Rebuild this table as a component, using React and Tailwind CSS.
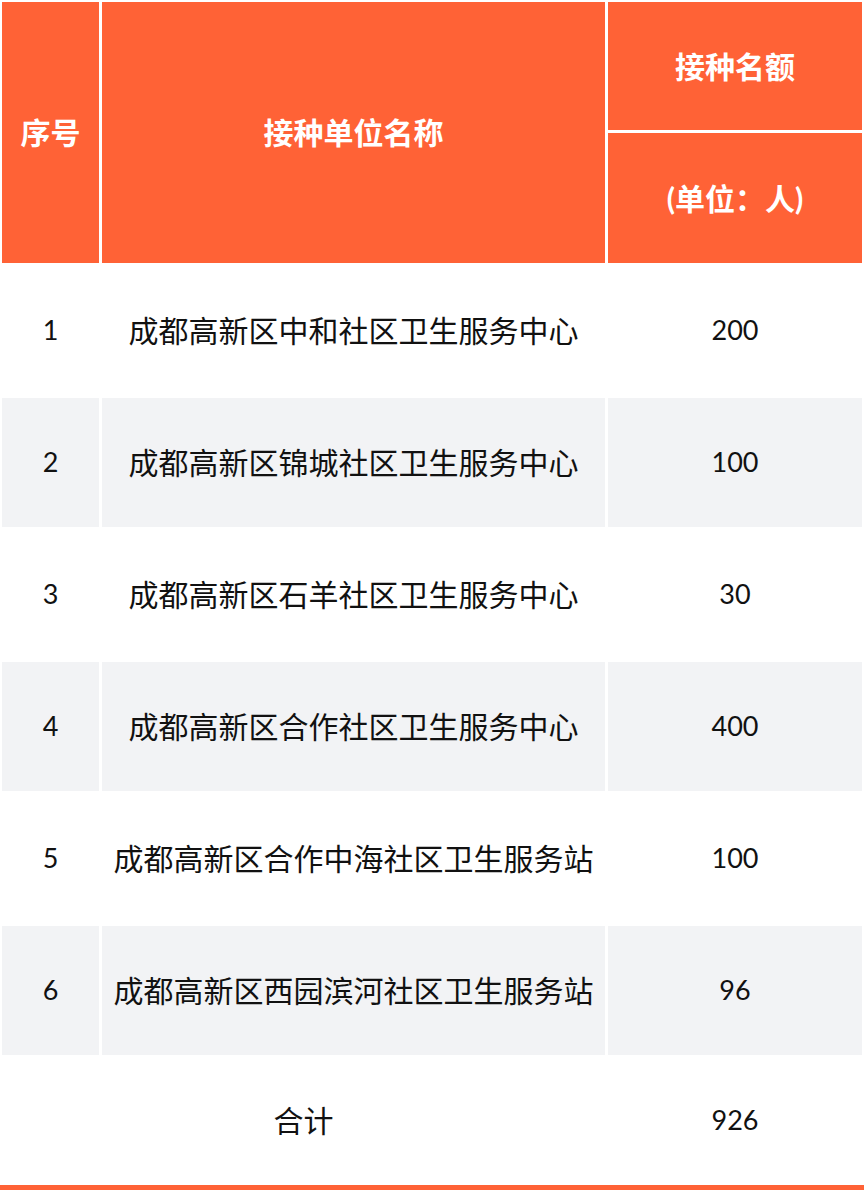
const ROWS = [
  { no: '1', name: '成都高新区中和社区卫生服务中心', count: '200' },
  { no: '2', name: '成都高新区锦城社区卫生服务中心', count: '100' },
  { no: '3', name: '成都高新区石羊社区卫生服务中心', count: '30' },
  { no: '4', name: '成都高新区合作社区卫生服务中心', count: '400' },
  { no: '5', name: '成都高新区合作中海社区卫生服务站', count: '100' },
  { no: '6', name: '成都高新区西园滨河社区卫生服务站', count: '96' },
]

const headCell = 'bg-[#ff6236] text-white font-bold text-[30px] flex items-center justify-center'
const bodyText = 'text-[#111111] flex items-center justify-center'

export default function App() {
  return (
    <div className="w-[864px] h-[1190px] bg-white overflow-hidden" style={{ fontFamily: '"Lato", "Noto Sans CJK SC", sans-serif' }}>
      <div className="grid grid-cols-[97px_503px_254px] grid-rows-[128px_130px_repeat(6,129px)_125px] gap-[3px] p-[2px]">
        {/* header */}
        <div className={`${headCell} row-span-2`}>序号</div>
        <div className={`${headCell} row-span-2`}>接种单位名称</div>
        <div className={headCell}>接种名额</div>
        <div className={headCell}>(单位：人)</div>

        {ROWS.map((r, i) => {
          const bg = i % 2 === 1 ? 'bg-[#f2f3f5]' : 'bg-white'
          return [
            <div key={r.no + 'a'} className={`${bg} ${bodyText} text-[27px]`}>{r.no}</div>,
            <div key={r.no + 'b'} className={`${bg} ${bodyText} text-[30px]`}>{r.name}</div>,
            <div key={r.no + 'c'} className={`${bg} ${bodyText} text-[27px]`}>{r.count}</div>,
          ]
        })}

        {/* total */}
        <div className={`col-span-2 bg-white ${bodyText} text-[30px]`}>合计</div>
        <div className={`bg-white ${bodyText} text-[27px]`}>926</div>
      </div>
      <div className="h-[6px] bg-[#ff6236]" />
    </div>
  )
}
